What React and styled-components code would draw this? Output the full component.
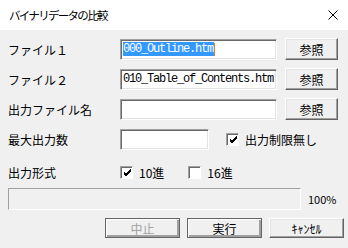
import styled, { createGlobalStyle } from "styled-components";

const GlobalStyle = createGlobalStyle`
    html, body {
        margin: 0;
        padding: 0;
        background: #f0f0f0;
    }
    * {
        box-sizing: border-box;
    }
`;

const UI_FONT = `"Noto Sans CJK JP", "Noto Sans", sans-serif`;
const MONO_FONT = `"Liberation Mono", "DejaVu Sans Mono", monospace`;

const App = () => {
    return (
        <Window>
            <GlobalStyle />
            <TitleBar>
                <span>バイナリデータの比較</span>
                <CloseIcon viewBox="0 0 10 10">
                    <path d="M0.5 0.5 L9.5 9.5 M9.5 0.5 L0.5 9.5" stroke="#000" strokeWidth="1" />
                </CloseIcon>
            </TitleBar>

            <Body>
                <Row>
                    <Label>ファイル１</Label>
                    <TextBox>
                        <Selected>000_Outline.htm</Selected>
                        <Caret />
                    </TextBox>
                    <Button>参照</Button>
                </Row>
                <Row>
                    <Label>ファイル２</Label>
                    <TextBox>010_Table_of_Contents.htm</TextBox>
                    <Button>参照</Button>
                </Row>
                <Row>
                    <Label>出力ファイル名</Label>
                    <TextBox />
                    <Button>参照</Button>
                </Row>
                <Row>
                    <Label>最大出力数</Label>
                    <TextBox $width={89} />
                    <Check $left={9}>
                        <Box $checked />
                        <span>出力制限無し</span>
                    </Check>
                </Row>
                <FormatRow>
                    <Label>出力形式</Label>
                    <Check>
                        <Box $checked />
                        <span>10進</span>
                    </Check>
                    <Check $left={24}>
                        <Box />
                        <span>16進</span>
                    </Check>
                </FormatRow>
                <ProgressRow>
                    <Progress />
                    <Percent>100%</Percent>
                </ProgressRow>
                <Actions>
                    <Button $w={75} $framed $disabled>中止</Button>
                    <Button $w={75} $framed>実行</Button>
                    <Button $w={75}>ｷｬﾝｾﾙ</Button>
                </Actions>
            </Body>
        </Window>
    );
};

const CheckMark = () => (
    <svg width="9" height="9" viewBox="0 0 9 9">
        <path d="M1 4 L3 6 L8 1 M1 5 L3 7 L8 2 M1 6 L3 8 L8 3" stroke="#000" strokeWidth="1" fill="none" />
    </svg>
);

const Box = ({ $checked }) => <CheckBox>{$checked && <CheckMark />}</CheckBox>;

const Window = styled.div`
    width: 348px;
    height: 248px;
    background: #f0f0f0;
    font-family: ${UI_FONT};
    font-size: 12px;
    color: #000;
    overflow: hidden;
`;

const TitleBar = styled.div`
    height: 30px;
    background: #fff;
    display: flex;
    align-items: center;
    justify-content: space-between;
    padding: 0 10px 0 9px;
    font-size: 11.5px;
    letter-spacing: -1.7px;
    color: #000;
`;

const CloseIcon = styled.svg`
    width: 10px;
    height: 10px;
    margin-bottom: 1px;
`;

const Body = styled.div`
    padding: 8px 0 0 8px;
    display: flex;
    flex-direction: column;
`;

const Row = styled.div`
    display: flex;
    align-items: center;
    height: 22px;
    margin-bottom: 8px;
`;

const FormatRow = styled(Row)`
    height: 20px;
    margin-top: 4px;
    margin-bottom: 6px;
`;

const Label = styled.div`
    width: 112px;
    padding-top: 1px;
    white-space: nowrap;
`;

const TextBox = styled.div`
    width: ${(p) => p.$width || 157}px;
    height: 21px;
    margin-right: 8px;
    background: #fff;
    border-top: 1px solid #a0a0a0;
    border-left: 1px solid #a0a0a0;
    border-bottom: 1px solid #fff;
    border-right: 1px solid #fff;
    box-shadow: inset 1px 1px 0 #696969, inset -1px -1px 0 #e3e3e3;
    padding: 0 0 0 2px;
    display: flex;
    align-items: center;
    font-family: ${MONO_FONT};
    font-size: 12px;
    letter-spacing: -1.2px;
    white-space: nowrap;
    overflow: hidden;
`;

const Selected = styled.span`
    background: #3399ff;
    color: #fff;
    padding-right: 1px;
`;

const Caret = styled.span`
    width: 1px;
    height: 13px;
    background: #e08020;
`;

const Button = styled.div`
    width: ${(p) => p.$w || 53}px;
    height: ${(p) => (p.$w ? 20 : 22)}px;
    display: flex;
    align-items: center;
    justify-content: center;
    background: #f0f0f0;
    color: ${(p) => (p.$disabled ? "#a0a0a0" : "#000")};
    border-top: 1px solid ${(p) => (p.$framed ? "#646464" : "#fff")};
    border-left: 1px solid ${(p) => (p.$framed ? "#646464" : "#fff")};
    border-bottom: 1px solid #646464;
    border-right: 1px solid #646464;
    box-shadow: ${(p) =>
        p.$framed
            ? "inset 1px 1px 0 #fff, inset -2px -2px 0 #a0a0a0"
            : "inset -1px -1px 0 #a0a0a0, inset 1px 1px 0 #e3e3e3"};
`;

const Check = styled.div`
    display: flex;
    align-items: center;
    gap: 6px;
    margin-left: ${(p) => p.$left || 0}px;
    white-space: nowrap;
`;

const CheckBox = styled.div`
    width: 13px;
    height: 13px;
    background: #fff;
    border-top: 1px solid #a0a0a0;
    border-left: 1px solid #a0a0a0;
    border-bottom: 1px solid #fff;
    border-right: 1px solid #fff;
    box-shadow: inset 1px 1px 0 #696969;
    display: flex;
    align-items: center;
    justify-content: center;
    padding: 1px 0 0 1px;
`;

const ProgressRow = styled.div`
    display: flex;
    align-items: center;
    height: 22px;
    gap: 7px;
`;

const Progress = styled.div`
    width: 293px;
    height: 22px;
    border-top: 1px solid #a0a0a0;
    border-left: 1px solid #a0a0a0;
    border-bottom: 1px solid #fff;
    border-right: 1px solid #fff;
    background: #f0f0f0;
`;

const Percent = styled.div`
    font-size: 11px;
`;

const Actions = styled.div`
    display: flex;
    gap: 7px;
    margin-top: 8px;
    padding-left: 97px;
`;

export default App;
